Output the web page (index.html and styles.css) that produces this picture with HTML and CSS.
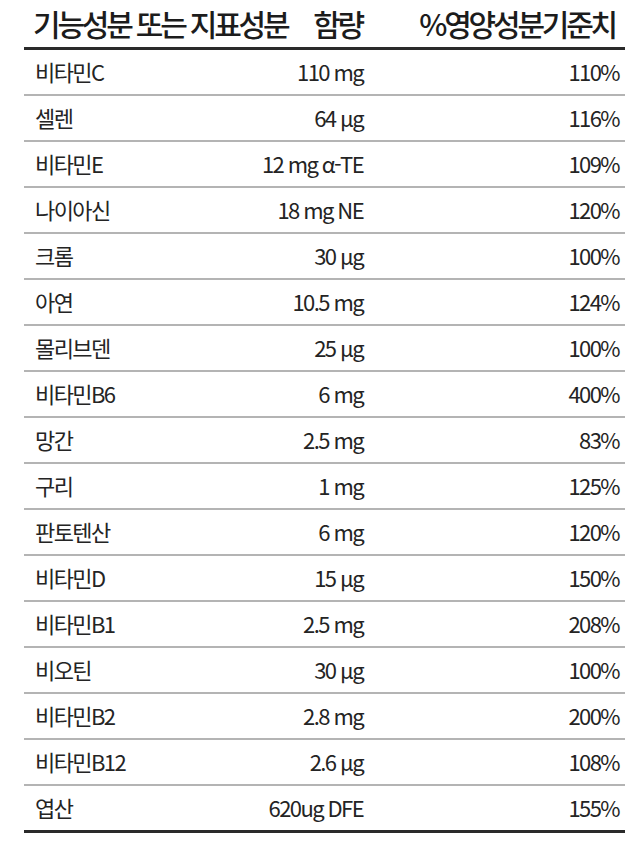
FILE: index.html
```html
<!DOCTYPE html>
<html lang="ko">
<head>
<meta charset="utf-8">
<title>기능성분 또는 지표성분</title>
<link rel="stylesheet" href="styles.css">
</head>
<body>
<div class="sheet">
  <div class="head">
    <div class="h-name">기능성분 또는 지표성분</div>
    <div class="h-amt">함량</div>
    <div class="h-pct">%영양성분기준치</div>
  </div>
  <div class="rows">
    <div class="row"><span class="name">비타민C</span><span class="amt">110 mg</span><span class="pct">110%</span></div>
    <div class="row"><span class="name">셀렌</span><span class="amt">64 μg</span><span class="pct">116%</span></div>
    <div class="row"><span class="name">비타민E</span><span class="amt">12 mg α-TE</span><span class="pct">109%</span></div>
    <div class="row"><span class="name">나이아신</span><span class="amt">18 mg NE</span><span class="pct">120%</span></div>
    <div class="row"><span class="name">크롬</span><span class="amt">30 μg</span><span class="pct">100%</span></div>
    <div class="row"><span class="name">아연</span><span class="amt">10.5 mg</span><span class="pct">124%</span></div>
    <div class="row"><span class="name">몰리브덴</span><span class="amt">25 μg</span><span class="pct">100%</span></div>
    <div class="row"><span class="name">비타민B6</span><span class="amt">6 mg</span><span class="pct">400%</span></div>
    <div class="row"><span class="name">망간</span><span class="amt">2.5 mg</span><span class="pct">83%</span></div>
    <div class="row"><span class="name">구리</span><span class="amt">1 mg</span><span class="pct">125%</span></div>
    <div class="row"><span class="name">판토텐산</span><span class="amt">6 mg</span><span class="pct">120%</span></div>
    <div class="row"><span class="name">비타민D</span><span class="amt">15 μg</span><span class="pct">150%</span></div>
    <div class="row"><span class="name">비타민B1</span><span class="amt">2.5 mg</span><span class="pct">208%</span></div>
    <div class="row"><span class="name">비오틴</span><span class="amt">30 μg</span><span class="pct">100%</span></div>
    <div class="row"><span class="name">비타민B2</span><span class="amt">2.8 mg</span><span class="pct">200%</span></div>
    <div class="row"><span class="name">비타민B12</span><span class="amt">2.6 μg</span><span class="pct">108%</span></div>
    <div class="row"><span class="name">엽산</span><span class="amt">620ug DFE</span><span class="pct">155%</span></div>
  </div>
</div>
</body>
</html>
```

FILE: styles.css
```css
html, body {
  margin: 0;
  padding: 0;
  background: #ffffff;
}

body {
  font-family: "Noto Sans CJK KR", "Noto Sans", sans-serif;
  color: #242424;
}

.sheet {
  margin-left: 24px;
  width: 601px;
}

.head {
  height: 47px;
  display: grid;
  grid-template-columns: 1fr 60px 253px;
  align-items: center;
  padding: 0 10px 2px 9px;
  box-sizing: border-box;
  font-size: 30px;
  font-weight: 500;
  letter-spacing: -3.2px;
  color: #1c1c1c;
  white-space: nowrap;
}

.h-name { text-align: left; }
.h-amt { text-align: right; }
.h-pct { text-align: right; }

.rows {
  border-top: 3px solid #2a2a2a;
  border-bottom: 3px solid #2a2a2a;
}

.row {
  display: grid;
  grid-template-columns: 150px 178px 1fr;
  align-items: center;
  padding: 0 6px 2px 11px;
  box-sizing: content-box;
  height: 42px;
  border-bottom: 2px solid #b4b4b4;
  font-size: 22px;
  letter-spacing: -1.6px;
  white-space: nowrap;
}

.row:last-child {
  border-bottom: none;
}

.name { text-align: left; }
.amt { text-align: right; }
.pct { text-align: right; }
```
